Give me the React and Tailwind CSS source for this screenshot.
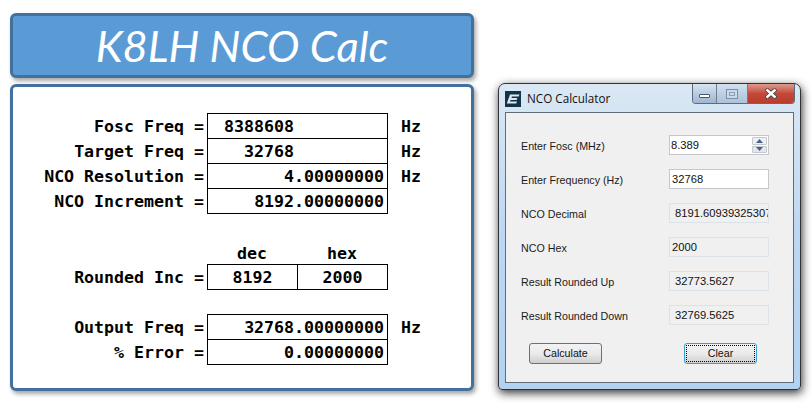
import React from "react";

const mono = "font-['DejaVu_Sans_Mono',monospace] font-bold text-[16.6px] text-black";

function Row({ label, value, unit, align = "right", pad = "pr-[3px]" }) {
  return (
    <div className="flex h-[25px] items-center">
      <div className={`w-[191px] shrink-0 whitespace-pre pt-[3px] text-right ${mono}`}>{label}</div>
      <div
        className={`ml-[3px] box-border flex h-[26px] w-[181px] shrink-0 items-center border border-black pt-[3px] ${pad} ${
          align === "right" ? "justify-end" : "justify-start"
        } ${mono}`}
      >
        <span className="whitespace-pre">{value}</span>
      </div>
      {unit && <div className={`ml-[13px] pt-[3px] ${mono}`}>{unit}</div>}
    </div>
  );
}

function RoundedRow() {
  return (
    <div className="flex h-[25px] items-center">
      <div className={`w-[191px] shrink-0 pt-[3px] text-right ${mono}`}>Rounded Inc =</div>
      <div className={`ml-[3px] box-border flex h-[26px] w-[181px] shrink-0 border border-black ${mono}`}>
        <div className="flex w-[90px] items-center justify-center border-r border-black pt-[3px]">8192</div>
        <div className="flex flex-1 items-center justify-center pt-[3px]">2000</div>
      </div>
    </div>
  );
}

function LeftPanels() {
  return (
    <div className="flex w-[464px] shrink-0 flex-col gap-[6px]">
      <div className="box-border flex h-[65px] items-center justify-center rounded-[6px] border-[3px] border-[#41719c] bg-[#5b9bd5] shadow-[2px_3px_4px_rgba(0,0,0,0.35)]">
        <h1 className="font-['Lato',sans-serif] text-[43.5px] leading-none font-normal text-white italic">
          K8LH NCO Calc
        </h1>
      </div>
      <div className="box-border h-[307px] rounded-[6px] border-[3px] border-[#41719c] bg-white pt-[26px] shadow-[2px_3px_4px_rgba(0,0,0,0.35)]">
        <Row label="Fosc Freq =" value="8388608" unit="Hz" align="left" pad="pl-[16px]" />
        <Row label="Target Freq =" value="32768" unit="Hz" align="left" pad="pl-[36px]" />
        <Row label="NCO Resolution =" value="4.00000000" unit="Hz" />
        <Row label="NCO Increment =" value="8192.00000000" />
        <div className="flex h-[51px] items-end pl-[194px]">
          <div className={`w-[90px] text-center leading-[20px] ${mono}`}>dec</div>
          <div className={`w-[90px] text-center leading-[20px] ${mono}`}>hex</div>
        </div>
        <RoundedRow />
        <div className="h-[25px]" />
        <Row label="Output Freq =" value="32768.00000000" unit="Hz" />
        <Row label="% Error =" value="0.00000000" />
      </div>
    </div>
  );
}

function Field({ label, value, readOnly = true, pad = "pl-[5px]", spinner = false }) {
  return (
    <div className="flex h-[34px] items-start">
      <div className="w-[148px] shrink-0 pt-[3px] text-[10.7px] text-[#1a1a1a]">{label}</div>
      <div
        className={`box-border flex h-[20px] w-[100px] items-center overflow-hidden border text-[11.2px] ${pad} ${
          readOnly ? "border-[#dce3e8] bg-[#f0f0f0]" : "border-[#c4c8cc] bg-white"
        } ${spinner ? "border-[#a9abae]" : ""}`}
      >
        <span className="whitespace-pre text-[#111]">{value}</span>
        {spinner && (
          <div className="mr-px ml-auto flex h-[16px] w-[15px] shrink-0 flex-col gap-px">
            <div className="flex flex-1 items-center justify-center rounded-[1px] border border-[#c5c8cc] bg-[#eef0f3]">
              <svg width="7" height="4" viewBox="0 0 7 4"><path d="M3.5 0L7 4H0z" fill="#4a5f8a" /></svg>
            </div>
            <div className="flex flex-1 items-center justify-center rounded-[1px] border border-[#c5c8cc] bg-[#e3e6ea]">
              <svg width="7" height="4" viewBox="0 0 7 4"><path d="M0 0H7L3.5 4z" fill="#4a5f8a" /></svg>
            </div>
          </div>
        )}
      </div>
    </div>
  );
}

function WindowControls() {
  return (
    <div className="flex h-[20px] w-[103px] overflow-hidden rounded-b-[4px] border border-t-0 border-[#5d6b7c]">
      <div className="flex w-[24px] items-center justify-center border-r border-[#6e7c8c] bg-gradient-to-b from-[#d6e4f2] via-[#b9cde2] to-[#9fb6cf]">
        <div className="mt-[5px] h-[4px] w-[11px] rounded-[1px] border border-[#49566a] bg-white" />
      </div>
      <div className="flex w-[31px] items-center justify-center border-r border-[#6e7c8c] bg-gradient-to-b from-[#d2e1f0] via-[#bdd0e4] to-[#adc3da]">
        <div className="flex h-[10px] w-[12px] items-center justify-center border border-[#7e8fa3] bg-[#c9d9e9]">
          <div className="h-[4px] w-[6px] border border-[#8fa0b3]" />
        </div>
      </div>
      <div className="flex flex-1 items-center justify-center bg-gradient-to-b from-[#dc9a8e] via-[#c4493a] to-[#b93c2c]">
        <svg width="14" height="11" viewBox="0 0 14 11">
          <path d="M2 1l10 9M12 1L2 10" stroke="#3d3d3d" strokeWidth="4" />
          <path d="M2.5 1.5l9 8M11.5 1.5l-9 8" stroke="#fff" strokeWidth="2.4" />
        </svg>
      </div>
    </div>
  );
}

function AppIcon() {
  return (
    <svg width="16" height="16" viewBox="0 0 16 16" className="shrink-0">
      <rect width="16" height="16" fill="#12344a" />
      <path d="M5 3.5h9.5l-.8 2H7l-.6 1.6h6l-.8 1.9H5.6L5 10.6h7l-.8 2H1.8z" fill="#dfe8ee" />
    </svg>
  );
}

function FormWindow() {
  return (
    <div className="ml-[24px] flex h-[307px] w-[303px] shrink-0 flex-col rounded-t-[7px] rounded-b-[4px] border border-[#2f3236] bg-gradient-to-b from-[#dbe8f4] via-[#bcd7f2] to-[#b3d2f2] px-[6px] pb-[6px] shadow-[1px_3px_10px_rgba(0,0,0,0.8)]">
      <div className="-mr-[1px] flex h-[28px] shrink-0 items-start">
        <div className="mt-[6px] flex items-center gap-[6px]">
          <AppIcon />
          <span className="font-['Open_Sans',sans-serif] text-[11.7px] text-[#111]">NCO Calculator</span>
        </div>
        <div className="ml-auto">
          <WindowControls />
        </div>
      </div>
      <div className="box-border flex-1 border border-[#5f6d78] bg-[#f0f0f0] pt-[22px] pl-[15px] font-['Liberation_Sans',sans-serif] text-[10.7px]">
        <Field label="Enter Fosc (MHz)" value="8.389" readOnly={false} pad="pl-[1px]" spinner />
        <Field label="Enter Frequency (Hz)" value="32768" readOnly={false} pad="pl-[2px]" />
        <Field label="NCO Decimal" value="8191.60939325307" />
        <Field label="NCO Hex" value="2000" pad="pl-[2px]" />
        <Field label="Result Rounded Up" value="32773.5627" />
        <Field label="Result Rounded Down" value="32769.5625" />
        <div className="mt-[4px] flex pl-[8px]">
          <button className="h-[21px] w-[73px] rounded-[3px] border border-[#707070] bg-gradient-to-b from-[#f2f2f2] via-[#ebebeb] to-[#cfcfcf] text-[#111]">
            Calculate
          </button>
          <button className="ml-[82px] flex h-[21px] w-[73px] items-center justify-center rounded-[3px] border border-[#3c9fd0] bg-gradient-to-b from-[#f2f2f2] via-[#ebebeb] to-[#cfcfcf] p-px text-[#111]">
            <span className="flex h-full w-full items-center justify-center border border-dotted border-black">Clear</span>
          </button>
        </div>
      </div>
    </div>
  );
}

export default function App() {
  return (
    <div className="flex h-[403px] w-[812px] items-start overflow-hidden bg-white pt-[13px] pl-[10px]">
      <LeftPanels />
      <div className="pt-[70px]">
        <FormWindow />
      </div>
    </div>
  );
}
